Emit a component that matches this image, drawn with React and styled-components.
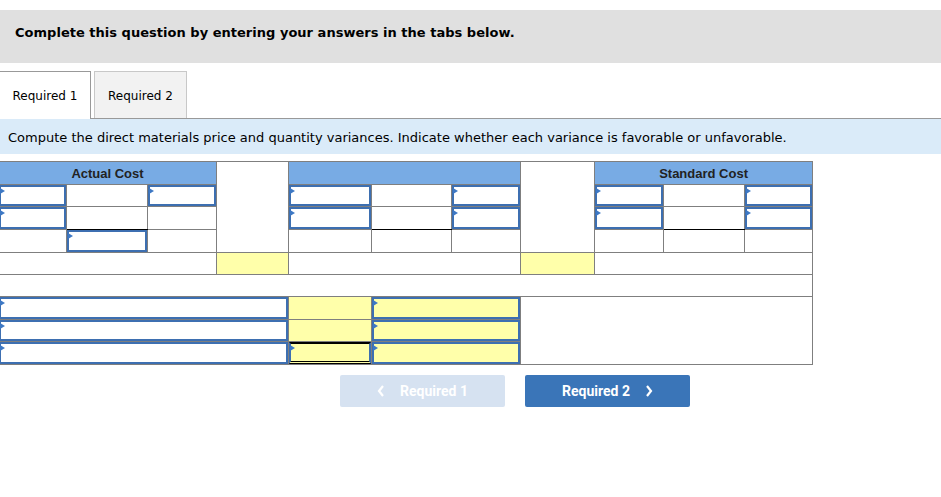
import React from "react";
import styled, { createGlobalStyle } from "styled-components";

const GlobalStyle = createGlobalStyle`
  html, body { margin: 0; padding: 0; background: #fff; overflow: hidden; }
  body { font-family: "DejaVu Sans", Verdana, sans-serif; color: #000; }
`;

const Page = styled.div`
  padding-top: 10px;
  width: 941px;
`;

const Banner = styled.div`
  height: 53px;
  box-sizing: border-box;
  background: #e0e0e0;
  padding: 15px 0 0 15px;
  font-size: 13px;
  font-weight: bold;
  letter-spacing: 0.02px;
`;

const Tabs = styled.div`
  display: flex;
  gap: 3px;
  margin-top: 8px;
  height: 47px;
  border-bottom: 1px solid #999;
`;

const Tab = styled.div`
  width: ${(p) => p.$w}px;
  display: flex;
  align-items: center;
  justify-content: center;
  font-size: 12px;
  box-sizing: border-box;
  background: ${(p) => (p.$active ? "#fff" : "#f2f2f2")};
  border: 1px solid ${(p) => (p.$active ? "#999" : "#c8c8c8")};
  border-left: ${(p) => (p.$active ? "none" : undefined)};
  border-bottom: none;
  margin-bottom: ${(p) => (p.$active ? "-1px" : "0")};
  padding-top: 1px;
`;

const Prompt = styled.div`
  height: 35px;
  background: #daebf9;
  display: flex;
  align-items: center;
  padding-left: 8px;
  font-size: 13px;
  padding-top: 1px;
  box-sizing: border-box;
`;

const Table = styled.table`
  margin: 7px 0 0 -2px;
  border-collapse: collapse;
  table-layout: fixed;
  width: 814px;
  font-family: "Liberation Sans", Arial, sans-serif;
`;

const Row = styled.tr`
  height: ${(p) => p.$h}px;
`;

const Cell = styled.td`
  border: 1px solid #7f7f7f;
  padding: 0;
  background: ${(p) => (p.$head ? "#78abe4" : p.$yellow ? "#ffffaa" : "#fff")};
  border-bottom-color: ${(p) => (p.$under ? "#000" : "#7f7f7f")};
  text-align: center;
  font-weight: bold;
  font-size: 13px;
  color: #222;
  vertical-align: middle;
  position: relative;
`;

const Input = styled.div`
  position: absolute;
  inset: 0;
  border: 2px solid #3d6fb1;
  border-top-color: ${(p) => (p.$double ? "#000" : "#3d6fb1")};
  border-bottom: ${(p) => (p.$double ? "3px double #000" : undefined)};
  background: ${(p) => (p.$yellow ? "#ffffaa" : "#fff")};
  &::before {
    content: "";
    position: absolute;
    left: -1px;
    top: 1px;
    border-top: 3px solid transparent;
    border-bottom: 3px solid transparent;
    border-left: 5px solid #3d78c4;
  }
`;

const Buttons = styled.div`
  display: flex;
  gap: 20px;
  margin-top: 10px;
  padding-left: 340px;
`;

const Button = styled.div`
  width: 165px;
  height: 32px;
  border-radius: 2px;
  display: flex;
  align-items: center;
  justify-content: center;
  gap: 15px;
  font-family: Roboto, "Liberation Sans", Arial, sans-serif;
  font-weight: bold;
  font-size: 14px;
  color: #fff;
  background: ${(p) => (p.$disabled ? "#d6e2f1" : "#3a75b8")};
`;

const Chevron = ({ dir }) => (
  <svg width="8" height="12" viewBox="0 0 8 12">
    <path
      d={dir === "left" ? "M6 1 L2 6 L6 11" : "M2 1 L6 6 L2 11"}
      fill="none"
      stroke="#fff"
      strokeWidth="2.2"
    />
  </svg>
);

const widths = [68, 81, 69, 72, 83, 80, 69, 74, 69, 81, 68];
const heights = [23, 22, 23, 23, 22, 22, 23, 22, 23];

// three columns under one cost heading; "in" = entry box, "u" = underlined total
const patterns = {
  left: [
    ["in", "", "in"],
    ["in", "u", ""],
    ["", "in", ""],
  ],
  other: [
    ["in", "", "in"],
    ["in", "u", "in"],
    ["", "", ""],
  ],
};

const Block = ({ row, kind }) =>
  patterns[kind][row].map((k, i) => (
    <Cell key={i} $under={k === "u"}>
      {k === "in" && <Input />}
    </Cell>
  ));

export default function App() {
  return (
    <Page>
      <GlobalStyle />
      <Banner>Complete this question by entering your answers in the tabs below.</Banner>
      <Tabs>
        <Tab $active $w={91}>Required 1</Tab>
        <Tab $w={93}>Required 2</Tab>
      </Tabs>
      <Prompt>
        Compute the direct materials price and quantity variances. Indicate whether each
        variance is favorable or unfavorable.
      </Prompt>
      <Table>
        <colgroup>
          {widths.map((w, i) => (
            <col key={i} style={{ width: w }} />
          ))}
        </colgroup>
        <tbody>
          <Row $h={heights[0]}>
            <Cell $head colSpan={3}>Actual Cost</Cell>
            <Cell rowSpan={4} />
            <Cell $head colSpan={3} />
            <Cell rowSpan={4} />
            <Cell $head colSpan={3}>Standard Cost</Cell>
          </Row>
          {[0, 1, 2].map((row) => (
            <Row key={row} $h={heights[row + 1]}>
              <Block row={row} kind="left" />
              <Block row={row} kind="other" />
              <Block row={row} kind="other" />
            </Row>
          ))}
          <Row $h={heights[4]}>
            <Cell colSpan={3} />
            <Cell $yellow />
            <Cell colSpan={3} />
            <Cell $yellow />
            <Cell colSpan={3} />
          </Row>
          <Row $h={heights[5]}>
            <Cell colSpan={11} />
          </Row>
          {[0, 1, 2].map((row) => (
            <Row key={row} $h={heights[row + 6]}>
              <Cell colSpan={4}>
                <Input />
              </Cell>
              <Cell $yellow>{row === 2 && <Input $yellow $double />}</Cell>
              <Cell $yellow colSpan={2}>
                <Input $yellow />
              </Cell>
              {row === 0 && <Cell colSpan={4} rowSpan={3} />}
            </Row>
          ))}
        </tbody>
      </Table>
      <Buttons>
        <Button $disabled>
          <Chevron dir="left" />
          Required 1
        </Button>
        <Button>
          Required 2
          <Chevron dir="right" />
        </Button>
      </Buttons>
    </Page>
  );
}
